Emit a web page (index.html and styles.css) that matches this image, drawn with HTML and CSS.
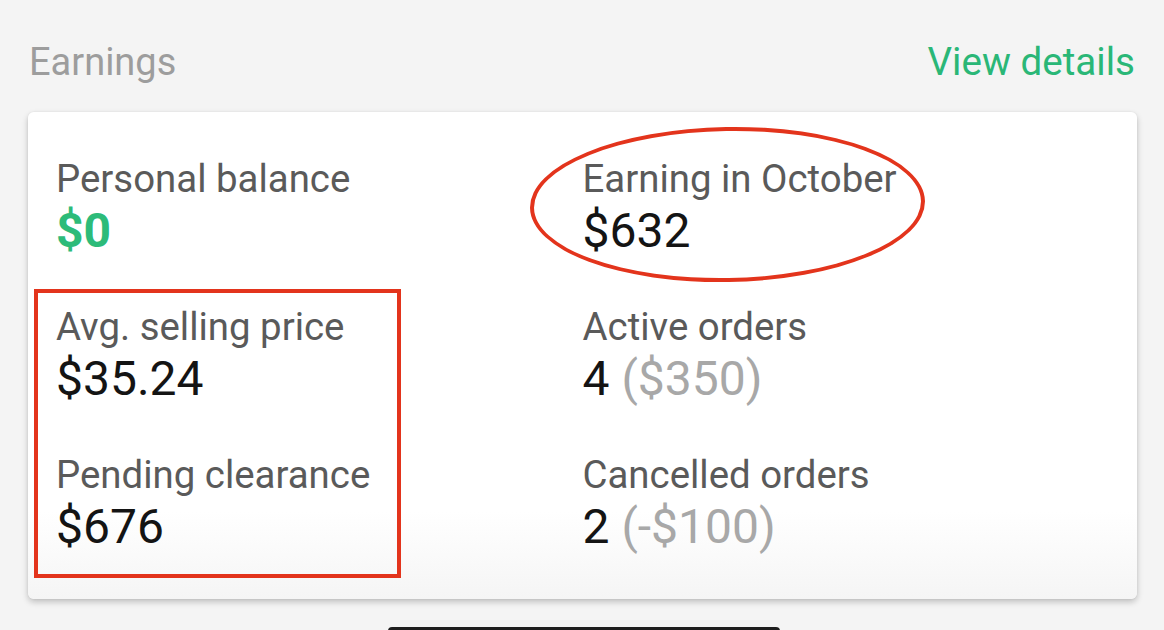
FILE: index.html
```html
<!DOCTYPE html>
<html lang="en">
<head>
    <meta charset="UTF-8">
    <title>Earnings</title>
    <meta name="viewport" content="width=device-width, initial-scale=1.0">
    <link rel="stylesheet" href="styles.css">
</head>
<body>
    <div class="section-head">
        <span class="section-title">Earnings</span>
        <a class="view-link" href="#">View details</a>
    </div>
    <div class="card">
        <div class="stat">
            <div class="stat-label">Personal balance</div>
            <div class="stat-value green">$0</div>
        </div>
        <div class="stat">
            <div class="stat-label">Earning in October</div>
            <div class="stat-value">$632</div>
        </div>
        <div class="stat">
            <div class="stat-label">Avg. selling price</div>
            <div class="stat-value">$35.24</div>
        </div>
        <div class="stat">
            <div class="stat-label">Active orders</div>
            <div class="stat-value">4 <span class="muted">($350)</span></div>
        </div>
        <div class="stat">
            <div class="stat-label">Pending clearance</div>
            <div class="stat-value">$676</div>
        </div>
        <div class="stat">
            <div class="stat-label">Cancelled orders</div>
            <div class="stat-value">2 <span class="muted">(-$100)</span></div>
        </div>
        <!-- hand-drawn annotations -->
        <div class="mark-ellipse"></div>
        <div class="mark-box"></div>
    </div>
    <div class="bottom-pill"></div>
</body>
</html>
```

FILE: styles.css
```css
html, body {
    margin: 0;
    padding: 0;
    height: 100%;
    overflow: hidden;
    font-family: Roboto, 'Liberation Sans', Arial, sans-serif;
    background: #f4f4f4;
}
.section-head {
    display: flex;
    justify-content: space-between;
    align-items: center;
    padding: 39px 29px 27px 29px;
    font-size: 38.6px;
    line-height: 46px;
}
.section-title {
    color: #9d9d9d;
    font-size: 38px;
}
.view-link {
    color: #2ab777;
    text-decoration: none;
}
.card {
    position: relative;
    margin: 0 27px 0 28px;
    background: linear-gradient(180deg, #ffffff 0%, #ffffff 82%, #f5f5f5 100%);
    border-radius: 6px;
    box-shadow: 0 3px 6px rgba(0, 0, 0, 0.22), 0 0 2px rgba(0, 0, 0, 0.08);
    padding: 44px 28px 43px 28px;
    display: grid;
    grid-template-columns: 1fr 1fr;
    row-gap: 44px;
}
.stat-label {
    font-size: 38.4px;
    line-height: 46px;
    color: #5a5a5a;
}
.stat-value {
    font-size: 48px;
    line-height: 58px;
    color: #141414;
}
.stat-value.green {
    color: #2dbb79;
    font-weight: bold;
}
.muted {
    color: #a8a8a8;
}
.mark-ellipse {
    position: absolute;
    left: 502px;
    top: 15px;
    width: 387px;
    height: 147px;
    border: 4px solid #e3341c;
    border-radius: 50%;
    transform: rotate(-1deg);
}
.mark-box {
    position: absolute;
    left: 6px;
    top: 177px;
    width: 359px;
    height: 281px;
    border: 4px solid #e3341c;
}
.bottom-pill {
    width: 392px;
    height: 4px;
    margin: 28px 0 0 388px;
    background: #1e1e1e;
    border-radius: 4px 4px 0 0;
}
```
